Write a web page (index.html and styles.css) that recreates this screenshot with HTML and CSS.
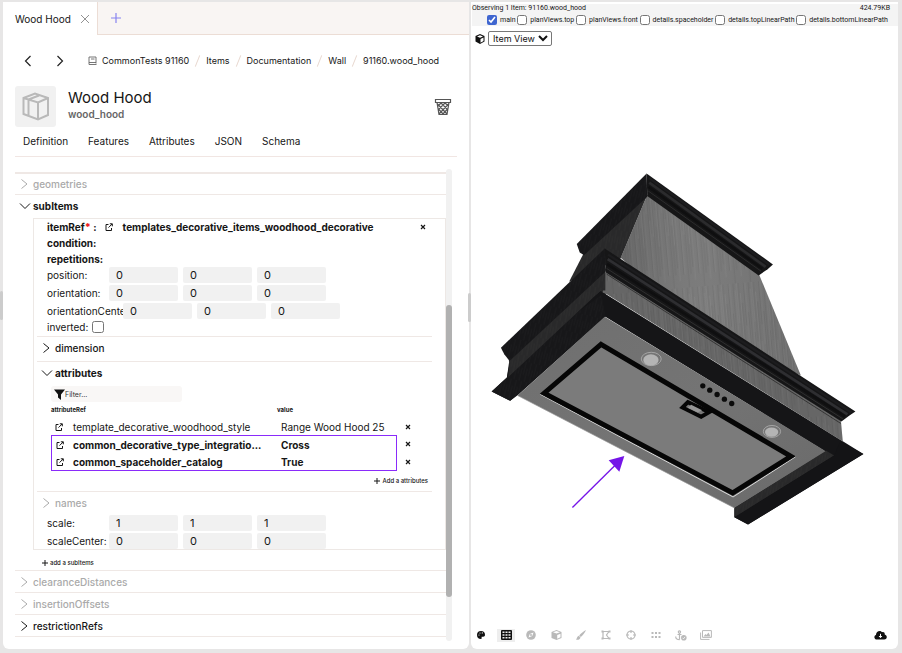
FILE: index.html
```html
<!DOCTYPE html>
<html lang="en">
<head>
<meta charset="utf-8">
<title>Wood Hood</title>
<link rel="stylesheet" href="styles.css">
</head>
<body>
<svg class="defs" aria-hidden="true">
  <symbol id="chev" viewBox="0 0 10 12"><path d="M2.500 1.500 8 6 2.500 10.500" fill="none" stroke="currentColor"/></symbol>
  <symbol id="down" viewBox="0 0 12 8"><path d="M1 1.500 6 6.500 11 1.500" fill="none" stroke="currentColor"/></symbol>
  <symbol id="link" viewBox="0 0 8 8"><path d="M3.500 1.500H1v6h5.500V5M4.800.800h2.500v2.500M7.200.900 3.500 4.600" fill="none" stroke="currentColor"/></symbol>
  <symbol id="plus" viewBox="0 0 8 8"><path d="M4 1v6M1 4h6" fill="none" stroke="currentColor"/></symbol>
  <symbol id="times" viewBox="0 0 6 6"><path d="M1 1l4 4M5 1 1 5" fill="none" stroke="currentColor" stroke-width="1.200"/></symbol>
</svg>
<div class="app">
  <main class="panel editor">
    <div class="tabbar">
      <div class="file-tab"><span>Wood Hood</span><button class="icon-btn" aria-label="Close tab"><svg width="10" height="10" viewBox="0 0 10 10"><path d="M1 1l8 8M9 1 1 9" stroke="#777" stroke-width=".8" fill="none"/></svg></button></div>
      <button class="icon-btn new-tab" aria-label="New tab"><svg width="12" height="12" viewBox="0 0 12 12"><path d="M6 1v10M1 6h10" stroke="#8783f0" stroke-width="1.200"/></svg></button>
    </div>
    <nav class="crumbs">
      <button class="icon-btn nav-btn" aria-label="Back"><svg width="8" height="12" viewBox="0 0 8 12"><path d="M6.500 1 1.500 6l5 5" fill="none" stroke="#222" stroke-width="1.200"/></svg></button>
      <button class="icon-btn nav-btn" aria-label="Forward"><svg width="8" height="12" viewBox="0 0 8 12"><path d="M1.500 1l5 5-5 5" fill="none" stroke="#222" stroke-width="1.200"/></svg></button>
      <a href="#" class="root"><svg width="9" height="10" viewBox="0 0 9 10"><path d="M8 7.500V1H1v7.500h7.500M1 6.500h7M3 3h3.500" fill="none" stroke="#666" stroke-width=".9"/></svg>CommonTests 91160</a>
      <i></i><a href="#">Items</a><i></i><a href="#">Documentation</a><i></i><a href="#">Wall</a><i></i><a href="#">91160.wood_hood</a>
    </nav>
    <header class="item-head">
      <div class="thumb"><svg width="28" height="29" viewBox="0 0 28 29"><path d="M1.500 6 13 1.500 26 6v17L16 27.500 1.500 22zM1.500 6 16 10.500 26 6M16 10.500v17M6.500 8v15.500M6.500 7.500 17 3.500" fill="none" stroke="#b9b9b9" stroke-width="2"/></svg></div>
      <div class="names"><h1>Wood Hood</h1><p>wood_hood</p></div>
      <button class="icon-btn trash" aria-label="Delete"><svg width="18" height="18" viewBox="0 0 18 18"><path d="M1.500 1.500h15v3h-15zM3 4.500 5 16.500h8l2-12M3.500 6 13 16M7 5l7 7M11 5l3.500 3M14.500 6 5 16M11 5 4 12M7 5 3.500 8.500M4.500 11l5 5.500M13.500 11l-5 5.500" fill="none" stroke="#555" stroke-width="1.200"/></svg></button>
    </header>
    <nav class="tabs"><a href="#">Definition</a><a href="#">Features</a><a href="#">Attributes</a><a href="#">JSON</a><a href="#">Schema</a></nav>
    <div class="scroll">
      <div class="content">
        <button class="section muted first"><svg width="10" height="12"><use href="#chev"/></svg>geometries</button>
        <button class="section open tall"><svg width="12" height="8"><use href="#down"/></svg>subItems</button>
        <div class="box">
          <div class="row strong"><span>itemRef<b class="req">*</b> :</span><svg class="ref-link" width="8" height="8"><use href="#link"/></svg><span class="ref-name">templates_decorative_items_woodhood_decorative</span><button class="icon-btn remove" aria-label="Remove item"><svg width="6" height="6"><use href="#times"/></svg></button></div>
          <div class="row strong">condition:</div>
          <div class="row strong">repetitions:</div>
          <div class="fields">
            <div class="vec"><label for="p0">position:</label><input id="p0" value="0"><input aria-label="position y" value="0"><input aria-label="position z" value="0"></div>
            <div class="vec"><label for="o0">orientation:</label><input id="o0" value="0"><input aria-label="orientation y" value="0"><input aria-label="orientation z" value="0"></div>
            <div class="vec wide"><label for="c0">orientationCenter:</label><input id="c0" value="0"><input aria-label="orientationCenter y" value="0"><input aria-label="orientationCenter z" value="0"></div>
          </div>
          <div class="row inverted"><label for="inv">inverted:</label><input id="inv" type="checkbox"></div>
          <button class="section sub dim"><svg width="10" height="12"><use href="#chev"/></svg>dimension</button>
          <button class="section sub open tall"><svg width="12" height="8"><use href="#down"/></svg>attributes</button>
          <div class="attributes">
            <div class="filter"><svg width="11" height="11" viewBox="0 0 11 11"><path d="M0 .5h11L7 5.500V11L4 8.500v-3z" fill="#111"/></svg><input aria-label="Filter" placeholder="Filter..."></div>
            <table>
              <colgroup><col class="c-icon"><col class="c-name"><col class="c-value"><col></colgroup>
              <thead><tr><th colspan="2">attributeRef</th><th>value</th><th></th></tr></thead>
              <tbody>
                <tr><td class="ic"><svg width="8" height="8"><use href="#link"/></svg></td><td>template_decorative_woodhood_style</td><td class="val">Range Wood Hood 25</td><td class="del"><button class="icon-btn" aria-label="Remove"><svg width="6" height="6"><use href="#times"/></svg></button></td></tr>
                <tr class="mark mark-top"><td class="ic"><svg width="8" height="8"><use href="#link"/></svg></td><td>common_decorative_type_integratio...</td><td class="val">Cross</td><td class="del"><button class="icon-btn" aria-label="Remove"><svg width="6" height="6"><use href="#times"/></svg></button></td></tr>
                <tr class="mark mark-bottom"><td class="ic"><svg width="8" height="8"><use href="#link"/></svg></td><td>common_spaceholder_catalog</td><td class="val">True</td><td class="del"><button class="icon-btn" aria-label="Remove"><svg width="6" height="6"><use href="#times"/></svg></button></td></tr>
              </tbody>
            </table>
            <button class="add add-attr"><svg width="8" height="8"><use href="#plus"/></svg>Add a attributes</button>
          </div>
          <button class="section sub muted tall"><svg width="10" height="12"><use href="#chev"/></svg>names</button>
          <div class="fields">
            <div class="vec"><label for="s0">scale:</label><input id="s0" value="1"><input aria-label="scale y" value="1"><input aria-label="scale z" value="1"></div>
            <div class="vec"><label for="t0">scaleCenter:</label><input id="t0" value="0"><input aria-label="scaleCenter y" value="0"><input aria-label="scaleCenter z" value="0"></div>
          </div>
        </div>
        <button class="add add-sub"><svg width="8" height="8"><use href="#plus"/></svg>add a subItems</button>
        <button class="section muted"><svg width="10" height="12"><use href="#chev"/></svg>clearanceDistances</button>
        <button class="section muted"><svg width="10" height="12"><use href="#chev"/></svg>insertionOffsets</button>
        <button class="section last"><svg width="10" height="12"><use href="#chev"/></svg>restrictionRefs</button>
      </div>
      <div class="track"><div class="thumbbar"></div></div>
    </div>
  </main>
  <aside class="panel viewer">
    <div class="observe">
      <div class="status"><span>Observing 1 Item: 91160.wood_hood</span><span>424.79KB</span></div>
      <div class="layers">
        <label><input type="checkbox" checked>main</label><label><input type="checkbox">planViews.top</label><label><input type="checkbox">planViews.front</label><label><input type="checkbox">details.spaceholder</label><label><input type="checkbox">details.topLinearPath</label><label><input type="checkbox">details.bottomLinearPath</label>
      </div>
    </div>
    <div class="viewpick"><svg width="10" height="10" viewBox="0 0 10 10"><path d="M5 0 9.500 2v5.500L5 10 .5 7.500V2z" fill="#111"/><path d="M2 2.500 5 1.300l3 1.200-3 1.200zM5.500 5l3-1.500V7l-3 1.700z" fill="#fff"/></svg><select aria-label="View"><option>Item View</option></select></div>
    <svg class="scene" viewBox="471 46 427 575" role="img" aria-label="Range hood model">
      <defs>
        <pattern id="wood" width="46" height="420" patternUnits="userSpaceOnUse" patternTransform="rotate(-5)">
          <rect width="46" height="420" fill="#757575"/>
          <path d="M3 0v180M3 230v150M11 60v300M19 0v130M27 90v290M34 0v250M41 150v270" stroke="#6d6d6d" stroke-width="3"/>
          <path d="M7 30v260M15 180v220M23 0v190M31 210v170M38 20v240M44 0v120" stroke="#7c7c7c" stroke-width="3"/>
        </pattern>
        <pattern id="dark" width="16" height="60" patternUnits="userSpaceOnUse" patternTransform="rotate(14)"><rect width="16" height="60" fill="#171719"/><path d="M3 0v40M11 20v40" stroke="#1e1e20" stroke-width="2"/></pattern>
        <pattern id="side" width="16" height="60" patternUnits="userSpaceOnUse" patternTransform="rotate(10)"><rect width="16" height="60" fill="#29292a"/><path d="M3 0v40M11 20v40" stroke="#303031" stroke-width="2"/></pattern>
        <linearGradient id="steel" x1="0" y1="0" x2="1" y2="1"><stop offset="0" stop-color="#6f6f6f"/><stop offset=".5" stop-color="#747474"/><stop offset="1" stop-color="#6a6a6a"/></linearGradient>
        <linearGradient id="shade" x1="0" y1="0" x2="1" y2="0"><stop offset="0" stop-color="#000" stop-opacity=".14"/><stop offset=".5" stop-color="#fff" stop-opacity=".05"/><stop offset="1" stop-color="#000" stop-opacity=".05"/></linearGradient>
      </defs>
      <g transform="translate(480 165) scale(.33333)">
        <path d="M500 90 310 262 265 350 420 280z" fill="url(#side)"/>
        <path d="M500 88 835 325 962 632 700 520 420 278z" fill="url(#wood)"/>
        <path d="M500 88 835 325 962 632 700 520 420 278z" fill="url(#shade)"/>
        <path d="M498 24 288 236 297 262 310 270 500 94z" fill="url(#dark)"/>
        <path d="M498 24 878 298 862 312 835 331 500 92z" fill="#161617"/>
        <path d="M506 38 868 299" stroke="#1c1c1e" stroke-width="7"/><path d="M506 52 856 305" stroke="#2b2b2d" stroke-width="8"/><path d="M504 65 846 311" stroke="#0f0f10" stroke-width="7"/><path d="M503 77 842 318" stroke="#2c2c2d" stroke-width="3"/>
        <path d="M375 310 375 390 86 630 84 585z" fill="url(#side)"/>
        <path d="M372 250 60 548 70 568 86 588 376 318z" fill="url(#dark)"/>
        <path d="M86 595 360 378 1150 868 803 1080 762 1058V1026L1032 858 374 455 112 690 88 708 32 680 78 638z" fill="#151517"/>
        <path d="M84 595 362 390 374 455 88 708 32 680 78 638z" fill="url(#dark)"/>
        <path d="M376 312 1082 764 1088 830 376 386 366 382z" fill="url(#wood)"/>
        <path d="M376 312 1082 764 1088 830 376 386 366 382z" fill="#000" opacity=".12"/>
        <path d="M372 250 1126 740 1108 752 1084 770 376 322z" fill="#161617"/>
        <path d="M382 268 1114 743" stroke="#1c1c1e" stroke-width="7"/><path d="M381 282 1102 749" stroke="#2e2e31" stroke-width="8"/><path d="M379 297 1094 755" stroke="#0f0f10" stroke-width="8"/><path d="M378 310 1088 762" stroke="#3c3c3d" stroke-width="2"/>
        <path d="M378 327 1082 776" stroke="#1c1c1d" stroke-width="2"/>
        <path d="M86 592 374 322V376L360 376 82 636z" fill="url(#side)"/>
        <path d="M372 455 1038 860 762 1030 110 692z" fill="url(#steel)"/>
        <path d="M1038 858 1062 872 790 1042 762 1058V1030z" fill="url(#side)"/>
        <path d="M1150 868 803 1080 762 1058 1062 872 1080 830z" fill="#141416"/>
        <path d="M110 692 762 1030" stroke="#999" stroke-width="2"/>
        <path d="M178 688 758 997 946 876" fill="none" stroke="#d8d8d8" stroke-width="3"/>
        <path d="M361 538 932 875 757 985 190 685z" fill="#7b7b7b" stroke="#060606" stroke-width="15"/>
        <path d="M622 712 686 742 662 756 606 728z" fill="#787878" stroke="#060606" stroke-width="12"/>
        <path d="M632 720 665 736 652 743 622 729z" fill="#969696"/>
        <g fill="#0b0b0b"><circle cx="667" cy="663" r="8"/><circle cx="688" cy="676" r="8"/><circle cx="710" cy="689" r="8"/><circle cx="732" cy="703" r="8"/><circle cx="754" cy="716" r="8"/></g>
        <g fill="#747474" stroke="#bdbdbd" stroke-width="2"><ellipse cx="512" cy="582" rx="30" ry="20"/><ellipse cx="875" cy="800" rx="26" ry="18"/></g>
        <g fill="#b4b4b4"><ellipse cx="511" cy="585" rx="23" ry="17"/><ellipse cx="874" cy="802" rx="20" ry="14"/></g>
        <path d="M275 1029 405 900" stroke="#7514e8" stroke-width="4"/><path d="M431 874 384 887 416 921z" fill="#7514e8"/>
      </g>
    </svg>
    <div class="tools">
      <button aria-label="Palette"><svg width="10" height="10" viewBox="0 0 10 10"><path d="M5 1a4 4 0 1 0 0 8c1 0 .6-1.200.6-2s3.400.5 3.400-2A4 4 0 0 0 5 1z" fill="#111"/><g fill="#fff"><circle cx="3" cy="5" r=".6"/><circle cx="4" cy="3" r=".6"/><circle cx="6.300" cy="2.900" r=".6"/></g></svg></button>
      <button class="active" aria-label="Grid"><svg width="11" height="10" viewBox="0 0 11 10"><rect width="11" height="10" rx="1" fill="#111"/><path d="M1.500 1.500h2v1.500h-2zM4.500 1.500h2v1.500h-2zM7.500 1.500h2v1.500h-2zM1.500 4.200h2v1.500h-2zM4.500 4.200h2v1.500h-2zM7.500 4.200h2v1.500h-2zM1.500 7h2v1.500h-2zM4.500 7h2v1.500h-2zM7.500 7h2v1.500h-2z" fill="#eee"/></svg></button>
      <button aria-label="Compass"><svg width="10" height="10" viewBox="0 0 10 10"><circle cx="5" cy="5" r="4.800"/><path d="M7.500 2.500 6.200 6 2.500 7.500 3.800 4z" fill="#fff"/><circle cx="5" cy="5" r="1"/></svg></button>
      <button aria-label="Cube"><svg width="11" height="10" viewBox="0 0 11 10"><path d="M5.500 0 10.500 2v6l-5 2-5-2V2z"/><path d="M2 2.300 5.500 1 9 2.300 5.500 3.600zM6.200 5l3.300-1.300v3.600L6.200 8.800z" fill="#fff"/></svg></button>
      <button aria-label="Brush"><svg width="10" height="10" viewBox="0 0 10 10"><path d="M10 0C8 1 4.500 4 3.200 5.400L4.800 7C6.500 5.500 9 2.500 10 0zM2.800 5.800l1.700 1.700C4 10 1.500 10 0 9.500 1 9 .9 6.300 2.800 5.800z"/></svg></button>
      <button aria-label="Shape"><svg width="10" height="10" viewBox="0 0 10 10"><path d="M2 1.500h6M2 8.500h6M2 1.500v7M8 1.500 5.500 5 8 8.500" fill="none" stroke="#b9b9b9" stroke-width="1.200"/><path d="M.5.500h2v2h-2zM7.500.500h2v2h-2zM.5 7.500h2v2h-2zM7.500 7.500h2v2h-2z"/></svg></button>
      <button aria-label="Target"><svg width="10" height="10" viewBox="0 0 10 10"><path d="M5 1a4 4 0 1 0 0 8 4 4 0 0 0 0-8M5 0v3M5 7v3M0 5h3M7 5h3" fill="none" stroke="#b9b9b9" stroke-width="1.200"/></svg></button>
      <button aria-label="Points"><svg width="10" height="10" viewBox="0 0 10 10"><path d="M.5 2h2v2h-2zM4 2h2v2H4zM7.500 2h2v2h-2zM.5 6h2v2h-2zM4 6h2v2H4zM7.500 6h2v2h-2z"/></svg></button>
      <button aria-label="Anchor"><svg width="12" height="11" viewBox="0 0 12 11"><path d="M4.500 3v6.500M2.500 4.500h4M.7 6.500c0 2 2 3.200 4 3.200M4.500 3a1.100 1.100 0 1 0-.1 0" fill="none" stroke="#b9b9b9" stroke-width="1.200"/><circle cx="8.800" cy="7.800" r="2.800"/><path d="M7.500 7.800l1 1 1.600-2" fill="none" stroke="#fff" stroke-width=".8"/></svg></button>
      <button aria-label="Images"><svg width="12" height="10" viewBox="0 0 12 10"><path d="M2.500.6h8.900v6.800H2.500zM.6 2.500v6.900H9.500" fill="none" stroke="#b9b9b9"/><path d="M3.500 6.500 5.500 4l1 1 2-2.500 2 4z"/></svg></button>
      <button class="cloud" aria-label="Download"><svg width="13" height="10" viewBox="0 0 13 10"><path d="M3 9.500C-.3 9.500-.3 5.500 2 5 1.800 1 6.500-.3 8 2.200c2-.7 3 .8 2.700 2.300 3 .7 2.700 5-.5 5z" fill="#111"/><path d="M6.500 3.800v3.500M5 6l1.500 1.700L8 6" stroke="#fff" fill="none"/></svg></button>
    </div>
  </aside>
  <span class="grip grip-left"></span><span class="grip grip-mid"></span>
</div>
</body>
</html>
```
FILE: styles.css
```css
* { box-sizing: border-box; }
body { margin: 0; background: #e7e6e6; color: #161616; font: 10px/16px Inter, "Liberation Sans", sans-serif; }
a { color: inherit; text-decoration: none; }
svg { display: block; flex: none; }
button { font: inherit; color: inherit; background: none; border: 0; padding: 0; }
.defs { position: absolute; width: 0; height: 0; }
.icon-btn { display: flex; }
.app { position: relative; display: grid; grid-template-columns: 466fr 427fr; gap: 2px; min-height: 100vh; padding: 2px 4px 4px 3px; }
.panel { background: #fff; border-radius: 0 0 6px 6px; display: flex; flex-direction: column; min-width: 0; overflow: hidden; }

.tabbar { display: flex; height: 33px; background: #f9f5f3; border-bottom: 1px solid #ecddd5; }
.file-tab { display: flex; align-items: center; gap: 9px; height: 33px; padding: 0 7px 0 12px; background: #fff; border-right: 1px solid #ecddd5; }
.new-tab { align-items: center; margin-left: 12px; }
.crumbs { display: flex; align-items: center; height: 51px; padding-left: 21px; font-size: 9px; white-space: nowrap; }
.nav-btn { width: 32px; }
.root { display: flex; align-items: center; gap: 5px; }
.crumbs i { width: 1px; height: 12px; margin: 0 8px; background: #e8d8d0; transform: rotate(22deg); }
.item-head { display: flex; align-items: center; padding: 0 17px 0 12px; }
.thumb { display: grid; place-items: center; width: 41px; height: 41px; border-radius: 3px; background: #f1f1f1; }
.names { flex: 1; margin-left: 12px; padding-bottom: 4px; }
h1 { margin: 0; font-size: 15px; line-height: 18px; font-weight: 400; }
.names p { margin: 0; line-height: 14px; font-weight: 600; color: #666; }
.tabs { display: flex; gap: 20px; margin: 0 12px; padding-left: 8px; border-bottom: 1px solid #f1e6e3; line-height: 29px; }

.scroll { display: flex; flex: 1; margin: 12px 17px 8px 12px; }
.content { flex: 1; min-width: 0; padding-top: 3px; }
.track { width: 6px; border-radius: 3px; background: #f1f1f1; padding-top: 136px; }
.thumbbar { height: 292px; border-radius: 3px; background: #b1b1b1; }
.section { display: flex; align-items: center; gap: 4px; width: 100%; height: 22px; padding-left: 4px; border-top: 1px solid #efe8e5; font-weight: 500; }
.first { border-top-width: 2px; }
.tall { height: 24px; padding-bottom: 2px; }
.open { font-weight: 700; gap: 2px; }
.muted { color: #aaa; }
.last { height: 23px; border-bottom: 1px solid #efe8e5; }
.box { margin-left: 18px; border: 1px solid #ede8e5; padding: 0 13px 0 3px; }
.row { display: flex; align-items: center; height: 16px; padding-left: 10px; }
.strong { font-weight: 700; }
.req { color: #e22; }
.ref-link { margin: 0 10px 0 8px; }
.remove { margin-left: auto; margin-right: 6px; }
.fields { display: grid; gap: 2px; padding-left: 10px; }
.vec { display: flex; gap: 5px; font-size: 10px; }
.vec label { width: 62px; margin-right: -5px; white-space: nowrap; overflow: hidden; }
.vec.wide label { width: 76px; }
.vec input { width: 69px; height: 16px; border: 0; border-radius: 2px; padding: 0 7px; background: #f1f1f1; color: inherit; font: 11px Inter, sans-serif; }
.inverted { gap: 4px; margin-bottom: 1px; }
.inverted input { width: 12px; height: 12px; margin: 0; }
.dim { height: 25px; padding-bottom: 2px; }
.attributes { padding-left: 14px; }
.filter { display: flex; align-items: center; width: 131px; height: 16px; margin-top: 1px; padding-left: 3px; border-radius: 3px; background: #f9f7f6; }
.filter input { width: 100px; border: 0; padding: 0; background: none; font: 7px Inter, sans-serif; }
.filter input::placeholder { color: #333; }
table { width: 100%; table-layout: fixed; border-collapse: separate; border-spacing: 0; }
th, td { padding: 0; text-align: left; white-space: nowrap; }
th { height: 16px; font-size: 6px; line-height: 8px; }
td { height: 17px; line-height: 16px; }
.c-icon { width: 22px; }
.c-name { width: 204px; }
.c-value { width: 120px; }
.ic { padding-left: 4px; }
.val { padding-left: 4px; }
.del { padding-left: 8px; }
.mark td { height: 18px; font-weight: 700; }
.mark td:first-child { border-left: 1px solid #8a2bfa; }
.mark .val { border-right: 1px solid #8a2bfa; }
.mark-top td:not(.del) { border-top: 1px solid #8a2bfa; }
.mark-bottom td:not(.del) { border-bottom: 1px solid #8a2bfa; }
.add { display: flex; align-items: center; gap: 1px; height: 20px; font: 500 6px/8px Inter, sans-serif; }
.add-attr { margin: 0 4px 0 auto; }
.add-sub { padding: 5px 0 0 26px; }

.viewer { padding: 2px 0 0 1px; }
.observe { background: #f4f4f4; font: 7px/9px Roboto, sans-serif; padding-bottom: 1px; }
.status { display: flex; justify-content: space-between; padding-right: 8px; }
.layers { display: flex; justify-content: space-between; padding: 2px 10px 0 15px; white-space: nowrap; }
.layers label { display: flex; align-items: center; gap: 3px; }
.layers input { width: 10px; height: 10px; margin: 0; accent-color: #3f66d0; }
.viewpick { display: flex; align-items: center; gap: 3px; padding: 5px 0 0 3px; }
.viewpick select { width: 64px; height: 15px; padding: 0; border: 1px solid #777; border-radius: 2px; background: #fff; color: #111; font: 9px Inter, sans-serif; }
.scene { flex: 1; width: 100%; min-height: 0; }
.tools { display: flex; align-items: center; gap: 7px; height: 28px; padding: 0 11px 0 0; fill: #b9b9b9; }
.tools button { display: grid; place-items: center; width: 18px; height: 13px; }
.tools .active { background: #eee; }
.tools .cloud { width: 13px; margin-left: auto; }
.grip { position: absolute; width: 3px; height: 29px; border-radius: 2px; background: #ccc; }
.grip-left { left: 0; top: 291px; }
.grip-mid { left: 468px; top: 293px; }
```
